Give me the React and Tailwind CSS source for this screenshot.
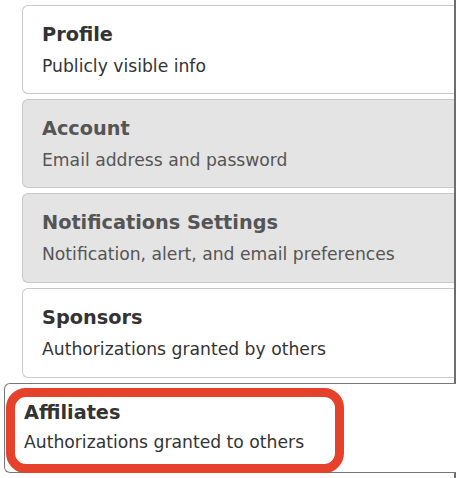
import React from "react";

const cards = [
  { title: "Profile", sub: "Publicly visible info", grey: false, h: "h-[89px]" },
  { title: "Account", sub: "Email address and password", grey: true, h: "h-[89px]" },
  { title: "Notifications Settings", sub: "Notification, alert, and email preferences", grey: true, h: "h-[90px]" },
  { title: "Sponsors", sub: "Authorizations granted by others", grey: false, h: "h-[90px]" },
];

export default function App() {
  return (
    <div
      className="w-[456px] h-[478px] bg-white flex overflow-hidden"
      style={{ fontFamily: '"DejaVu Sans", sans-serif' }}
    >
      <div className="w-[454px] shrink-0 flex flex-col pt-[5px] gap-[5px]">
        {cards.map((c) => (
          <div
            key={c.title}
            className={`${c.h} ml-[22px] border border-r-0 border-[#c9c9c9] rounded-tl-[6px] rounded-bl-[6px] pl-[19px] pt-[15px] ${
              c.grey ? "bg-[#e4e4e4] text-[#555555]" : "bg-white text-[#333333]"
            }`}
          >
            <div className="text-[19.3px] font-bold leading-[28px] whitespace-nowrap">{c.title}</div>
            <div className="text-[17.2px] leading-[30px] mt-[2px] whitespace-nowrap">{c.sub}</div>
          </div>
        ))}
        <div className="relative z-10 h-[90px] ml-[4px] -mr-[2px] bg-white border border-r-0 border-[#777777] rounded-tl-[6px] rounded-bl-[6px] pl-[19px] pt-[15px] text-[#333333]">
          <div className="text-[19.3px] font-bold leading-[28px] whitespace-nowrap">Affiliates</div>
          <div className="text-[17.2px] leading-[28px] mt-[1px] whitespace-nowrap">Authorizations granted to others</div>
          <div className="absolute left-[1px] top-[4px] w-[338px] h-[85px] border-[9px] border-[#e5412b] rounded-[20px] pointer-events-none" />
        </div>
      </div>
      <div className="flex-1 border-l-2 border-[#6e6e6e]" />
    </div>
  );
}
